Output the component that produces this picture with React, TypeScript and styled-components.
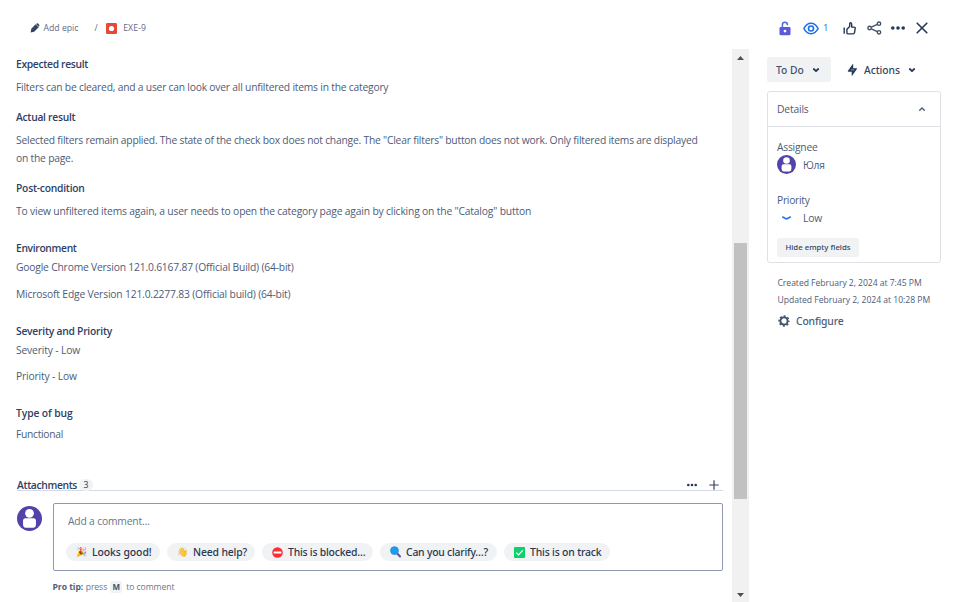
import React from "react";
import styled, { createGlobalStyle } from "styled-components";

const Global = createGlobalStyle`
  *, *::before, *::after { box-sizing: border-box; }
  body { margin: 0; background: #fff; }
`;

const navy = "#253858";
const slate = "#4d5c78";
const pale = "#f1f2f4";

const Page = styled.div`
  width: 958px;
  height: 602px;
  display: grid;
  grid-template-columns: 749px 1fr;
  grid-template-rows: 49px 553px;
  overflow: hidden;
  background: #fff;
  color: ${slate};
  font-family: "Open Sans", "Noto Sans", sans-serif;
  font-size: 10.3px;
  line-height: 18px;
  white-space: nowrap;

  svg { display: block; flex: none; }
`;

const Text = styled.span<{ $track?: number; $ml?: number }>`
  letter-spacing: ${(p) => p.$track ?? 0}px;
  margin-left: ${(p) => p.$ml ?? 0}px;
`;

/* Header */

const Breadcrumbs = styled.nav`
  display: flex;
  align-items: center;
  height: 56px;
  padding-left: 30px;
  font-size: 8.7px;
  color: #5e6c84;
`;

const Toolbar = styled.div`
  display: flex;
  align-items: center;
  height: 56px;
  padding-left: 30px;
  color: ${navy};
`;

const WatchCount = styled.span`
  width: 6px;
  margin: 0 14px 0 4px;
  font-size: 9.5px;
  font-weight: 500;
  color: #1d6fe8;
`;

const ToolIcon = styled.span<{ $gap: number }>`
  margin-right: ${(p) => p.$gap}px;
`;

/* Description column */

const Main = styled.main`
  display: grid;
  grid-template-columns: 732px 17px;
  min-height: 0;
`;

const Content = styled.div`
  padding: 6px 9px 0 16px;
  display: flex;
  flex-direction: column;
`;

const Heading = styled.h3<{ $top?: number; $track: number }>`
  margin: ${(p) => p.$top ?? 0}px 0 0;
  height: 18px;
  font-size: 10.3px;
  font-weight: 600;
  letter-spacing: ${(p) => p.$track}px;
  color: #2f4163;
`;

const Paragraph = styled.p<{ $top: number; $track: number }>`
  margin: ${(p) => p.$top}px 0 0;
  line-height: 17.5px;
  letter-spacing: ${(p) => p.$track}px;
`;

const AttachmentsBar = styled.div`
  display: flex;
  align-items: flex-end;
  height: 14px;
  margin-top: 33.5px;
  margin-left: 1px;
  border-bottom: 1px solid #d3dae5;
  color: ${navy};
`;

const Count = styled.span`
  width: 14px;
  height: 12px;
  margin: 0 0 -1px 2px;
  border-radius: 6px;
  background: ${pale};
  font-size: 8.6px;
  line-height: 12px;
  text-align: center;
`;

const BarTitle = styled.h3`
  margin: 0;
  height: 14px;
  font-size: 10.3px;
  line-height: 18px;
  font-weight: 600;
  letter-spacing: -0.36px;
  color: #2f4163;
`;

const BarActions = styled.div`
  display: flex;
  align-items: center;
  gap: 12px;
  height: 11px;
  margin: 0 4px 0 auto;
`;

const CommentRow = styled.div`
  display: flex;
  gap: 11px;
  margin-top: 12px;
  padding-left: 1px;
`;

const AvatarSlot = styled.div`
  padding-top: 3px;
`;

const Editor = styled.div`
  flex: 1;
  height: 68px;
  padding: 8px 12px;
  border: 1px solid #8f98b2;
  border-radius: 2px;
`;

const Placeholder = styled.div`
  padding-left: 2px;
  height: 18px;
  letter-spacing: -0.17px;
  color: #6b7588;
`;

const Chips = styled.div`
  display: flex;
  gap: 7px;
  margin-top: 13px;
`;

const Chip = styled.button<{ $w: number; $track: number }>`
  display: flex;
  align-items: center;
  gap: 5px;
  width: ${(p) => p.$w}px;
  height: 18px;
  padding: 0 0 0 10px;
  border: 0;
  border-radius: 9px;
  background: ${pale};
  color: #2b3750;
  font: 500 10.4px/18px "Noto Sans", sans-serif;
  letter-spacing: ${(p) => p.$track}px;
`;

const Emoji = styled.span`
  width: 11px;
  font: 9px/18px "Noto Color Emoji", sans-serif;
  letter-spacing: 0;
`;

const Tip = styled.div`
  display: flex;
  align-items: center;
  height: 12px;
  margin: 10px 0 0 36.5px;
  font-size: 8.6px;
  color: #6b778c;

  b { color: #505f79; letter-spacing: -0.05px; }
`;

const Key = styled.kbd`
  width: 12px;
  height: 12px;
  margin: 0 4px 0 3px;
  border-radius: 2px;
  background: ${pale};
  font: 700 8px/12px "Open Sans", sans-serif;
  text-align: center;
  color: #42526e;
`;

/* Scrollbar */

const ScrollTrack = styled.div`
  display: flex;
  flex-direction: column;
  align-items: center;
  padding: 7px 0 5px;
  background: #f1f1f1;
`;

const ScrollThumb = styled.div`
  width: 13px;
  height: 256px;
  margin: 183px 0 auto;
  background: #c1c1c1;
`;

/* Sidebar */

const Sidebar = styled.aside`
  padding: 8px 17px 0 18px;
`;

const ActionRow = styled.div`
  display: flex;
  align-items: center;
  gap: 16px;
`;

const ActionButton = styled.button<{ $filled?: boolean; $w: number }>`
  display: flex;
  align-items: center;
  width: ${(p) => p.$w}px;
  height: 25px;
  padding: 0 0 0 ${(p) => (p.$filled ? 9 : 0)}px;
  border: 0;
  border-radius: 2px;
  background: ${(p) => (p.$filled ? pale : "transparent")};
  color: ${(p) => (p.$filled ? "#42526e" : "#344563")};
  font: 500 10.3px/18px "Noto Sans", sans-serif;

  svg:last-child { margin-left: 8px; color: ${navy}; }
`;

const Card = styled.section`
  height: 172px;
  margin-top: 9px;
  border: 1px solid #dfe1e6;
  border-radius: 3px;
`;

const CardHeader = styled.header`
  display: flex;
  align-items: center;
  justify-content: space-between;
  height: 35px;
  padding: 0 14px 0 9px;
  border-bottom: 1px solid #dfe1e6;
`;

const CardBody = styled.div`
  padding: 11px 9px 0;
`;

const Label = styled.div<{ $track: number }>`
  height: 17px;
  letter-spacing: ${(p) => p.$track}px;
`;

const Value = styled.div<{ $bottom: number }>`
  display: flex;
  align-items: center;
  height: 19px;
  margin-bottom: ${(p) => p.$bottom}px;
`;

const IconCell = styled.span<{ $raise?: boolean }>`
  display: flex;
  justify-content: center;
  width: 19px;
  margin: ${(p) => (p.$raise ? -1 : 0)}px 7px 0 0;
`;

const HideButton = styled.button`
  display: block;
  width: 82px;
  height: 19px;
  padding: 0;
  border: 0;
  border-radius: 2px;
  background: ${pale};
  color: #344563;
  font: 500 7.8px/19px "Noto Sans", sans-serif;
`;

const Dates = styled.div`
  margin: 12px 0 0 10.5px;
  font-size: 8.6px;
  line-height: 17px;
`;

const Configure = styled.div`
  display: flex;
  align-items: center;
  gap: 6px;
  margin: 3px 0 0 11px;
  font: 500 10.4px/18px "Noto Sans", sans-serif;
  letter-spacing: -0.18px;
`;

/* Icons */

const Avatar = ({ size }: { size: number }) => (
  <svg width={size} height={size} viewBox="0 0 24 24">
    <circle cx="12" cy="12" r="12" fill="#5243aa" />
    <circle cx="12" cy="7" r="4.2" fill="#fff" />
    <path d="M5.800 14.200q0-2.400 2.400-2.400h7.600q2.400 0 2.400 2.400V17.500q0 3.300-2.600 3.300H8.400q-2.600 0-2.600-3.300z" fill="#fff" />
  </svg>
);

const Chevron = ({ up = false }: { up?: boolean }) => (
  <svg width="8" height="8" viewBox="0 0 8 8" fill="none" stroke="currentColor" strokeWidth={up ? 1.4 : 1.8} strokeLinecap="round" strokeLinejoin="round">
    <path d={up ? "M1.700 5.200 4 2.900l2.300 2.300" : "M1.800 3 4 5.100 6.200 3"} />
  </svg>
);

const Dots = ({ width, r }: { width: number; r: number }) => (
  <svg width={width} height="6" viewBox={`0 0 ${width} 6`} fill="currentColor">
    <circle cx={r} cy="3" r={r} />
    <circle cx={width / 2} cy="3" r={r} />
    <circle cx={width - r} cy="3" r={r} />
  </svg>
);

const Pencil = () => (
  <svg width="10" height="10" viewBox="0 0 10 10" fill="#344563">
    <path d="M1.300 5.700 5.600 1.300 8.700 4.300 4.200 8.700.6 9.400z" />
    <path d="M6 1 6.800.4q.7-.4 1.300.1l1.100 1.200q.5.700 0 1.300l-.5.800z" />
  </svg>
);

const BugIcon = () => (
  <svg width="11" height="11" viewBox="0 0 11 11">
    <rect width="11" height="11" rx="1.2" fill="#e5493a" />
    <circle cx="5.5" cy="5.5" r="2.600" fill="#fff" />
  </svg>
);

const Lock = () => (
  <svg width="12" height="15" viewBox="0 0 12 15">
    <path d="M3.400 6.500V3.700a2.500 2.500 0 0 1 5 0v.5" fill="none" stroke="#4c6fe0" strokeWidth="1.500" />
    <rect x=".5" y="6" width="11" height="8.300" rx="1.300" fill="#5e59d6" />
    <circle cx="6" cy="10.100" r="1.400" fill="#fff" />
  </svg>
);

const Eye = () => (
  <svg width="16" height="13" viewBox="0 0 16 13" fill="none" stroke="#1d6fe8" strokeWidth="1.600">
    <path d="M.9 6.500C2.700 3 5.200 1.300 8 1.300s5.300 1.700 7.100 5.200c-1.800 3.500-4.300 5.200-7.100 5.200S2.700 10 .9 6.500z" />
    <circle cx="8" cy="6.500" r="2.500" />
  </svg>
);

const Thumb = () => (
  <svg width="13" height="13" viewBox="0 0 13 13" fill="none" stroke="currentColor" strokeWidth="1.400" strokeLinejoin="round">
    <path d="M1.200 5.600v6.200" />
    <path d="M3.900 10.700V7.200L6.700 4.400V2q0-1.200.9-1.200T8.700 2v3.100h2.400q1.300 0 1.100 1.200l-.7 4.400q-.2 1.200-1.400 1.200H5.200q-1.300 0-1.300-1.200z" />
  </svg>
);

const Share = () => (
  <svg width="15" height="14" viewBox="0 0 15 14" fill="none" stroke="#42526e" strokeWidth="1.400">
    <circle cx="2.600" cy="7" r="1.700" />
    <circle cx="12" cy="2.700" r="1.700" />
    <circle cx="12" cy="11.300" r="1.700" />
    <path d="m4.300 6.200 6-2.800M4.300 7.800l6 2.800" />
  </svg>
);

const Close = () => (
  <svg width="12" height="12" viewBox="0 0 12 12" stroke="currentColor" strokeWidth="1.600" strokeLinecap="round">
    <path d="m1.200 1.200 9.600 9.600m0-9.600-9.600 9.600" />
  </svg>
);

const Bolt = () => (
  <svg width="11" height="12" viewBox="0 0 11 12" fill={navy}>
    <path d="M6.200.3v3.900h3.300q1 0 .4.900L5.300 11.500q-.6.700-.6-.2V7.700H1.400q-1 0-.4-.9L5.600.3q.6-.7.6 0z" />
    <path d="M3.900 5.900h3.200" stroke="#fff" strokeWidth=".5" />
  </svg>
);

const Plus = () => (
  <svg width="10" height="10" viewBox="0 0 10 10" stroke="#344563" strokeWidth="1.200">
    <path d="M5 .3v9.400M.3 5h9.400" />
  </svg>
);

const LowPriority = () => (
  <svg width="11" height="6" viewBox="0 0 11 6" fill="none" stroke="#1f74f5" strokeWidth="1.500" strokeLinecap="round" strokeLinejoin="round">
    <path d="M1.700 2 5.500 4 9.300 2" />
  </svg>
);

const Gear = () => (
  <svg width="12" height="12" viewBox="0 0 12 12" fill="none" stroke="#42526e">
    <circle cx="6" cy="6" r="3.600" strokeWidth="1.900" />
    <circle cx="6" cy="6" r="4.900" strokeWidth="1.600" strokeDasharray="1.924 1.924" strokeDashoffset=".96" />
  </svg>
);

const NoEntry = () => (
  <svg width="11" height="11" viewBox="0 0 11 11">
    <circle cx="5.500" cy="5.500" r="5.300" fill="#fb3037" />
    <rect x="1.600" y="4.500" width="7.800" height="2" rx=".4" fill="#fff" />
  </svg>
);

const Magnifier = () => (
  <svg width="11" height="12" viewBox="0 0 11 12">
    <path d="m7 7.300 3 3.200" stroke="#6b4fa0" strokeWidth="2" strokeLinecap="round" />
    <circle cx="4.500" cy="4.600" r="3.900" fill="#14a0f5" stroke="#2b7fc9" strokeWidth=".8" />
  </svg>
);

const CheckBox = () => (
  <svg width="11" height="11" viewBox="0 0 11 11">
    <rect width="11" height="11" rx=".8" fill="#0bd26d" />
    <path d="m2.300 5.700 2.200 2.200 4.300-4.600" fill="none" stroke="#fff" strokeWidth="1.200" />
  </svg>
);

const ScrollArrow = ({ down = false }: { down?: boolean }) => (
  <svg width="7" height="4" viewBox="0 0 7 4" fill="#505050">
    <path d={down ? "M0 0h7L3.500 4z" : "M0 4h7L3.500 0z"} />
  </svg>
);

const replies = [
  { icon: <Emoji>🎉</Emoji>, label: "Looks good!", w: 94, track: -0.06 },
  { icon: <Emoji>👋</Emoji>, label: "Need help?", w: 88, track: -0.15 },
  { icon: <NoEntry />, label: "This is blocked…", w: 111, track: -0.21 },
  { icon: <Magnifier />, label: "Can you clarify…?", w: 117, track: -0.22 },
  { icon: <CheckBox />, label: "This is on track", w: 106, track: -0.17 },
];

export default function App() {
  return (
    <>
      <Global />
      <Page>
        <Breadcrumbs>
          <Pencil />
          <Text $ml={3.5}>Add epic</Text>
          <Text $ml={16}>/</Text>
          <Text $ml={8}><BugIcon /></Text>
          <Text $ml={6.5} $track={0.13}>EXE-9</Text>
        </Breadcrumbs>
        <Toolbar>
          <ToolIcon $gap={12}><Lock /></ToolIcon>
          <Eye />
          <WatchCount>1</WatchCount>
          <ToolIcon $gap={11}><Thumb /></ToolIcon>
          <ToolIcon $gap={9}><Share /></ToolIcon>
          <ToolIcon $gap={11}><Dots width={14} r={1.8} /></ToolIcon>
          <Close />
        </Toolbar>

        <Main>
          <Content>
            <Heading $track={-0.32}>Expected result</Heading>
            <Paragraph $top={6} $track={-0.215}>
              Filters can be cleared, and a user can look over all unfiltered items in the category
            </Paragraph>
            <Heading $top={11.5} $track={-0.28}>Actual result</Heading>
            <Paragraph $top={6} $track={-0.213}>
              Selected filters remain applied. The state of the check box does not change. The "Clear
              filters" button does not work. Only filtered items are displayed
              <br />
              on the page.
            </Paragraph>
            <Heading $top={12} $track={-0.24}>Post-condition</Heading>
            <Paragraph $top={6} $track={-0.174}>
              To view unfiltered items again, a user needs to open the category page again by clicking
              on the "Catalog" button
            </Paragraph>
            <Heading $top={18} $track={-0.34}>Environment</Heading>
            <Paragraph $top={2} $track={-0.19}>
              Google Chrome Version 121.0.6167.87 (Official Build) (64-bit)
            </Paragraph>
            <Paragraph $top={9.5} $track={-0.175}>
              Microsoft Edge Version 121.0.2277.83 (Official build) (64-bit)
            </Paragraph>
            <Heading $top={19} $track={-0.24}>Severity and Priority</Heading>
            <Paragraph $top={1.5} $track={-0.157}>Severity - Low</Paragraph>
            <Paragraph $top={9} $track={-0.157}>Priority - Low</Paragraph>
            <Heading $top={18} $track={-0.1}>Type of bug</Heading>
            <Paragraph $top={4.5} $track={-0.3}>Functional</Paragraph>

            <AttachmentsBar>
              <BarTitle>Attachments</BarTitle>
              <Count>3</Count>
              <BarActions>
                <Dots width={10} r={1.3} />
                <Plus />
              </BarActions>
            </AttachmentsBar>
            <CommentRow>
              <AvatarSlot><Avatar size={25} /></AvatarSlot>
              <Editor>
                <Placeholder>Add a comment…</Placeholder>
                <Chips>
                  {replies.map((r) => (
                    <Chip key={r.label} $w={r.w} $track={r.track}>
                      {r.icon}
                      {r.label}
                    </Chip>
                  ))}
                </Chips>
              </Editor>
            </CommentRow>
            <Tip>
              <b>Pro tip:</b>
              <Text $ml={2.5} $track={-0.06}>press</Text>
              <Key>M</Key>
              <Text $track={-0.06}>to comment</Text>
            </Tip>
          </Content>
          <ScrollTrack>
            <ScrollArrow />
            <ScrollThumb />
            <ScrollArrow down />
          </ScrollTrack>
        </Main>

        <Sidebar>
          <ActionRow>
            <ActionButton $filled $w={64}>
              To Do
              <Chevron />
            </ActionButton>
            <ActionButton $w={72}>
              <Bolt />
              <Text $ml={6} $track={-0.06}>Actions</Text>
              <Chevron />
            </ActionButton>
          </ActionRow>
          <Card>
            <CardHeader>
              <Text $track={-0.17}>Details</Text>
              <Chevron up />
            </CardHeader>
            <CardBody>
              <Label $track={-0.24}>Assignee</Label>
              <Value $bottom={17}>
                <IconCell $raise><Avatar size={19} /></IconCell>
                <Text $track={-0.27}>Юля</Text>
              </Value>
              <Label $track={-0.29}>Priority</Label>
              <Value $bottom={11}>
                <IconCell><LowPriority /></IconCell>
                <Text $track={-0.1}>Low</Text>
              </Value>
              <HideButton>Hide empty fields</HideButton>
            </CardBody>
          </Card>
          <Dates>
            <Text $track={-0.04}>Created February 2, 2024 at 7:45 PM</Text>
            <br />
            <Text $track={-0.02}>Updated February 2, 2024 at 10:28 PM</Text>
          </Dates>
          <Configure>
            <Gear />
            Configure
          </Configure>
        </Sidebar>
      </Page>
    </>
  );
}
